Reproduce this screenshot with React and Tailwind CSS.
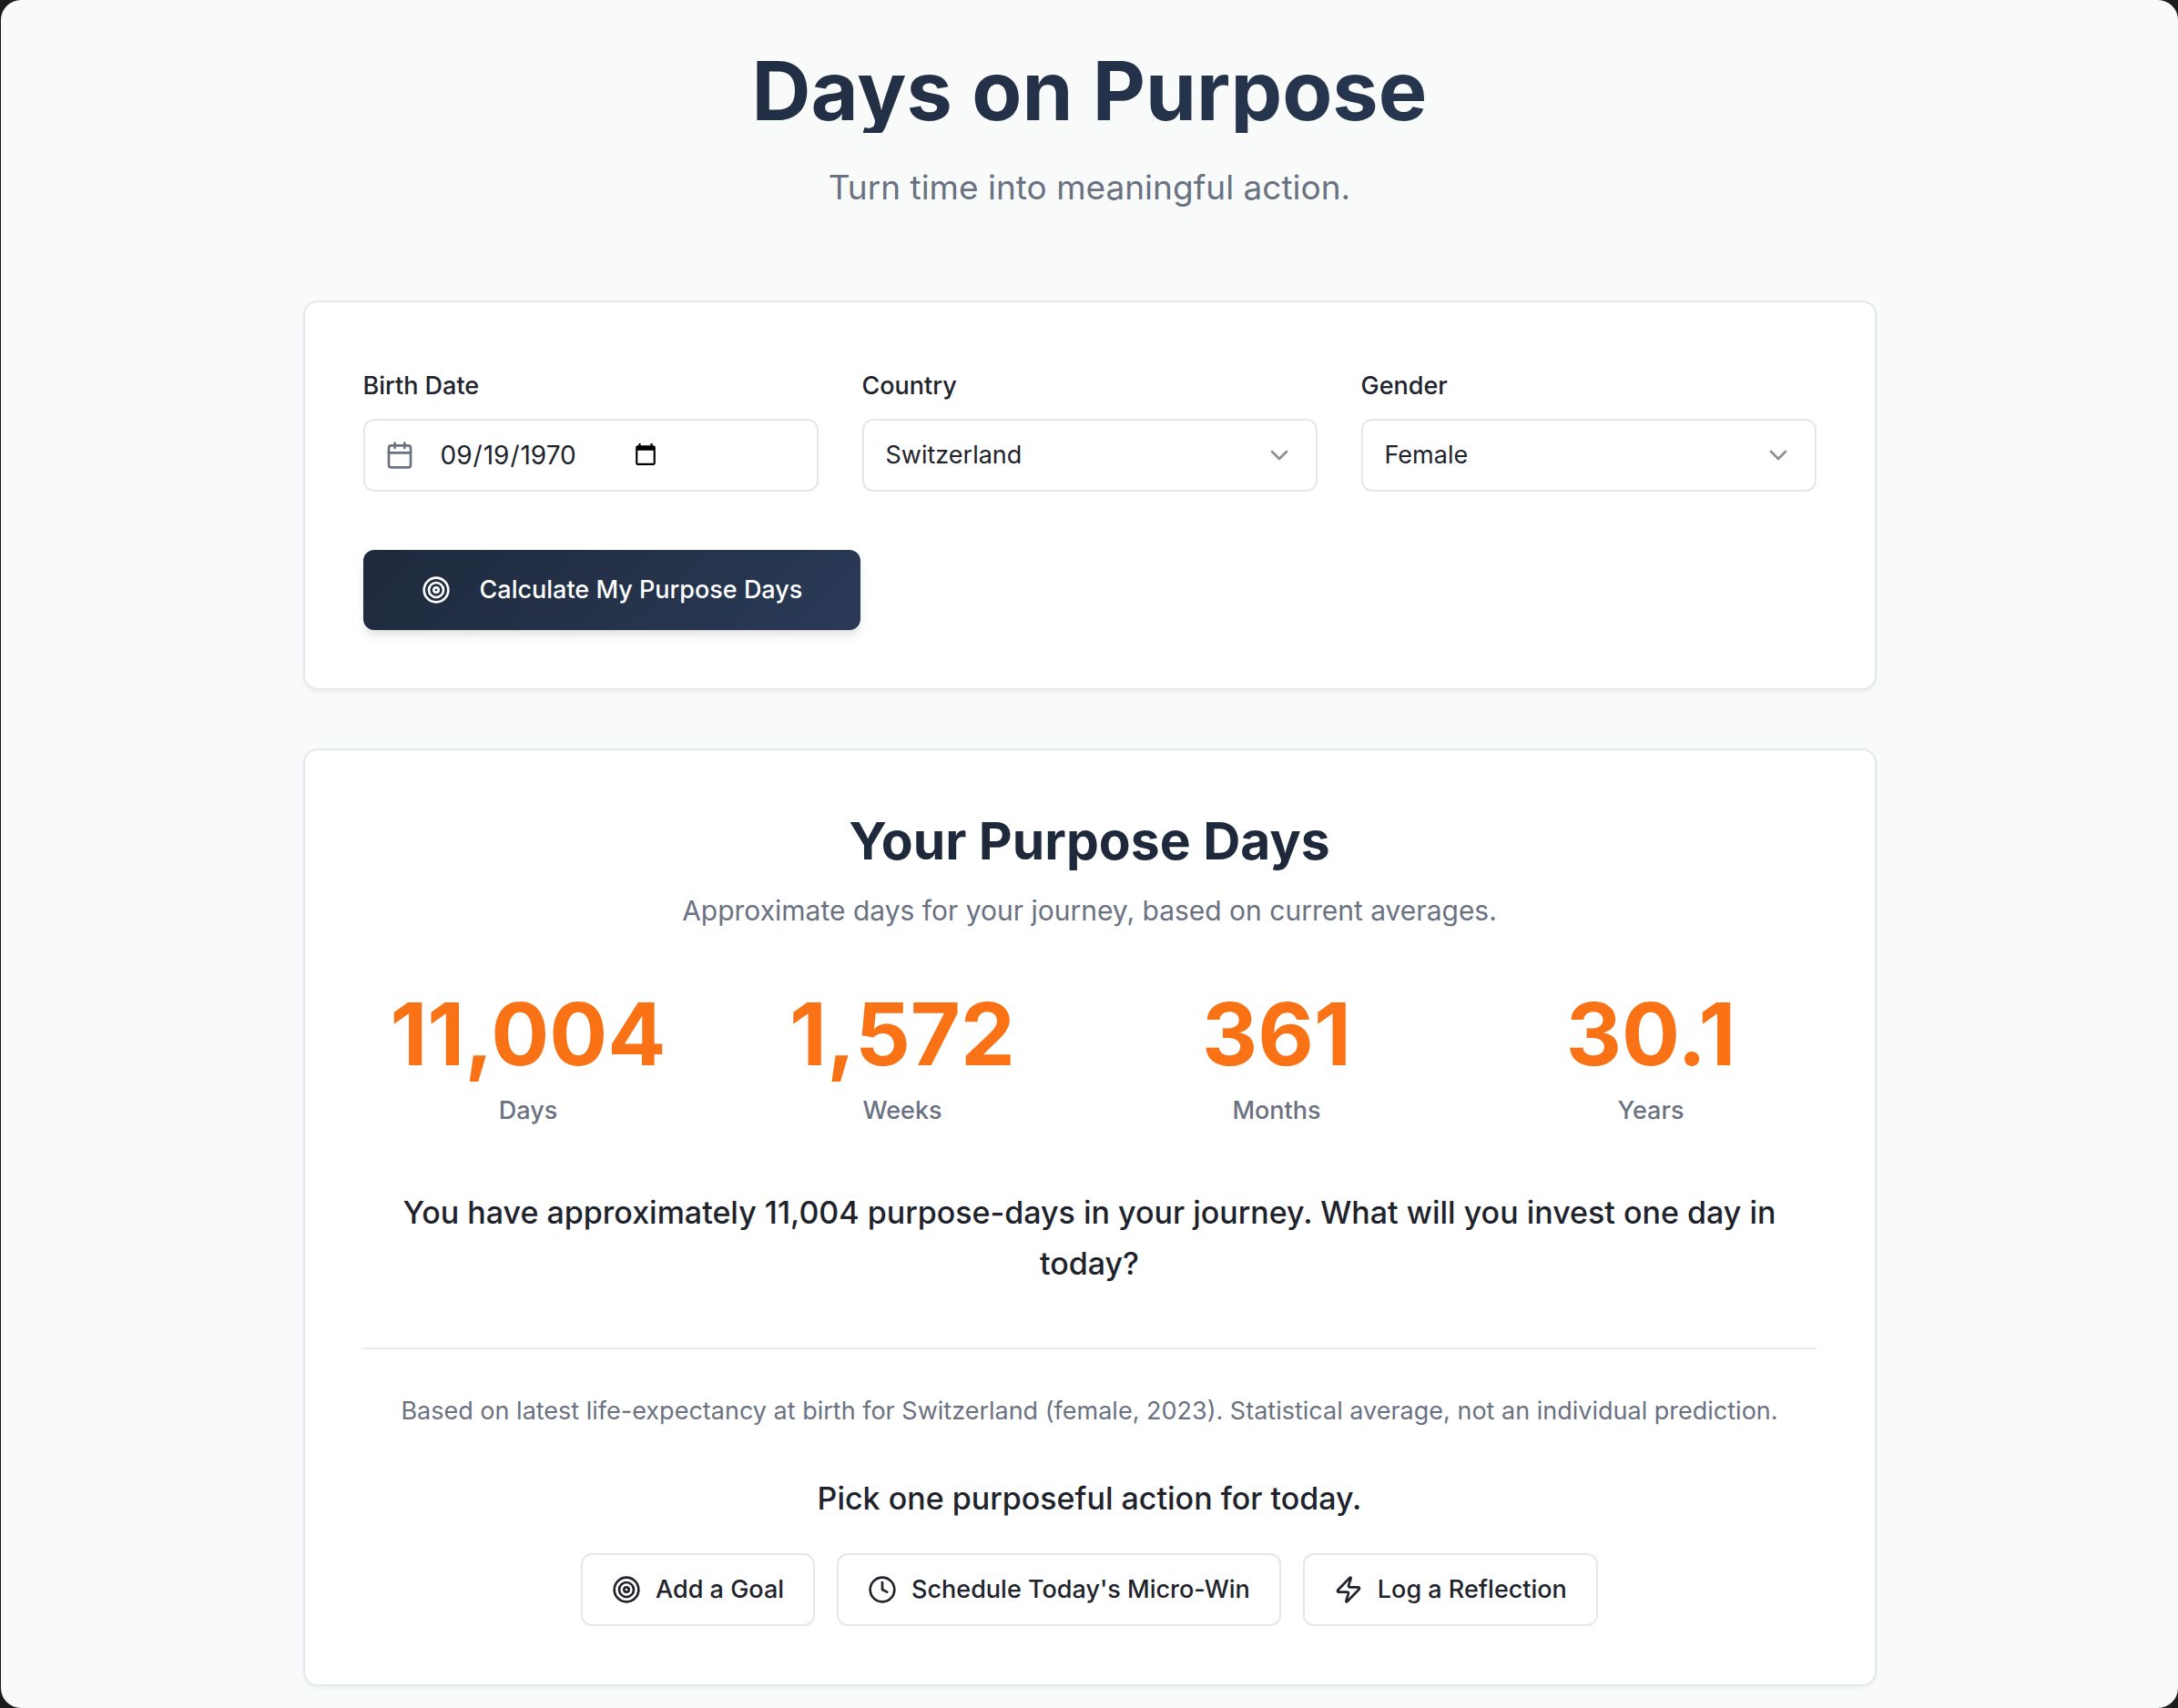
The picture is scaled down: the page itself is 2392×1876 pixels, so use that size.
import { useState } from "react";
import { Calendar, ChevronDown, Clock, Target, Zap } from "lucide-react";

const stats = [
  { value: "11,004", label: "Days" },
  { value: "1,572", label: "Weeks" },
  { value: "361", label: "Months" },
  { value: "30.1", label: "Years" },
];

const actions = [
  { icon: Target, label: "Add a Goal" },
  { icon: Clock, label: "Schedule Today's Micro-Win" },
  { icon: Zap, label: "Log a Reflection" },
];

function Card({ children }) {
  return (
    <section className="rounded-2xl border-2 border-[#e4e7ec] bg-white p-16 shadow-[0_2px_4px_rgba(0,0,0,0.05)]">
      {children}
    </section>
  );
}

function FieldLabel({ htmlFor, children }) {
  return (
    <label htmlFor={htmlFor} className="mb-4 block pt-2 font-medium">
      {children}
    </label>
  );
}

function SelectField({ id, label, value, options, onChange }) {
  return (
    <div>
      <FieldLabel htmlFor={id}>{label}</FieldLabel>
      <div className="relative">
        <select
          id={id}
          value={value}
          onChange={(e) => onChange(e.target.value)}
          className="block h-20 w-full appearance-none rounded-xl border-2 border-[#e4e7ec] bg-white px-6 text-[27px]"
        >
          {options.map((o) => (
            <option key={o}>{o}</option>
          ))}
        </select>
        <ChevronDown className="pointer-events-none absolute top-6 right-[26px] size-8 opacity-50" />
      </div>
    </div>
  );
}

export default function App() {
  const [date, setDate] = useState("1970-09-19");
  const [country, setCountry] = useState("Switzerland");
  const [gender, setGender] = useState("Female");

  return (
    <div className="min-h-screen bg-[#1c1c1c] pl-px font-[Inter,sans-serif]">
      <div className="min-h-screen rounded-[22px] bg-[#f9fbfb] text-[27px] leading-10 text-[#20232c]">
        <main className="mx-auto max-w-[1792px] px-8 pt-[50px] pb-6">
          <header className="mb-24 text-center">
            <h1 className="mb-8 bg-linear-[135deg] from-[#1e293b] to-[#2a3a57] bg-clip-text pt-1 text-[90px] leading-[92px] font-bold text-transparent">
              Days on Purpose
            </h1>
            <p className="text-[37px] leading-[56px] text-gray-500">Turn time into meaningful action.</p>
          </header>

          <div className="flex flex-col gap-16">
            <Card>
              <form onSubmit={(e) => e.preventDefault()}>
                <div className="mb-16 grid grid-cols-3 gap-12">
                  <div>
                    <FieldLabel htmlFor="birth">Birth Date</FieldLabel>
                    <div className="relative">
                      <Calendar className="absolute top-6 left-6 size-8 text-gray-500" />
                      <input
                        id="birth"
                        type="date"
                        value={date}
                        onChange={(e) => setDate(e.target.value)}
                        className="flex h-20 w-full rounded-xl border-2 border-[#e4e7ec] bg-white py-4 pr-6 pl-[82px] text-[28px]"
                      />
                    </div>
                  </div>
                  <SelectField
                    id="country"
                    label="Country"
                    value={country}
                    onChange={setCountry}
                    options={["Switzerland", "Germany", "Japan", "United States"]}
                  />
                  <SelectField
                    id="gender"
                    label="Gender"
                    value={gender}
                    onChange={setGender}
                    options={["Female", "Male"]}
                  />
                </div>
                <button
                  type="submit"
                  className="flex h-[88px] items-center gap-8 rounded-xl bg-linear-[135deg] from-[#1e293b] to-[#2a3a57] px-16 font-medium text-white shadow-[0_8px_12px_-2px_rgba(0,0,0,0.1),0_4px_8px_-4px_rgba(0,0,0,0.08)]"
                >
                  <Target className="size-8" />
                  Calculate My Purpose Days
                </button>
              </form>
            </Card>

            <Card>
              <div className="text-center">
                <h2 className="mb-4 text-[57px] leading-[72px] font-bold text-[#1e293b]">Your Purpose Days</h2>
                <p className="mb-16 text-[30px] leading-[48px] text-gray-500">
                  Approximate days for your journey, based on current averages.
                </p>
                <dl className="mb-16 grid grid-cols-4 gap-12">
                  {stats.map((s) => (
                    <div key={s.label} className="flex flex-col-reverse gap-4">
                      <dt className="font-medium text-gray-500">{s.label}</dt>
                      <dd className="text-[95px] leading-[96px] font-bold text-[#f97316]">{s.value}</dd>
                    </div>
                  ))}
                </dl>
                <p className="mb-16 text-[34px] leading-[56px] font-medium">
                  You have approximately 11,004 purpose-days in your journey. What will you invest one day in today?
                </p>
                <p className="border-t-2 border-[#e4e7ec] py-12 text-gray-500">
                  Based on latest life-expectancy at birth for Switzerland (female, 2023). Statistical average, not an
                  individual prediction.
                </p>
                <h3 className="mb-8 text-[34px] leading-[56px] font-medium">Pick one purposeful action for today.</h3>
                <div className="flex flex-wrap justify-center gap-6">
                  {actions.map(({ icon: Icon, label }) => (
                    <button
                      key={label}
                      type="button"
                      className="flex h-20 items-center gap-4 rounded-xl border-2 border-[#e4e7ec] bg-white px-8 font-medium"
                    >
                      <Icon className="size-8" />
                      {label}
                    </button>
                  ))}
                </div>
              </div>
            </Card>
          </div>
        </main>
      </div>
    </div>
  );
}
